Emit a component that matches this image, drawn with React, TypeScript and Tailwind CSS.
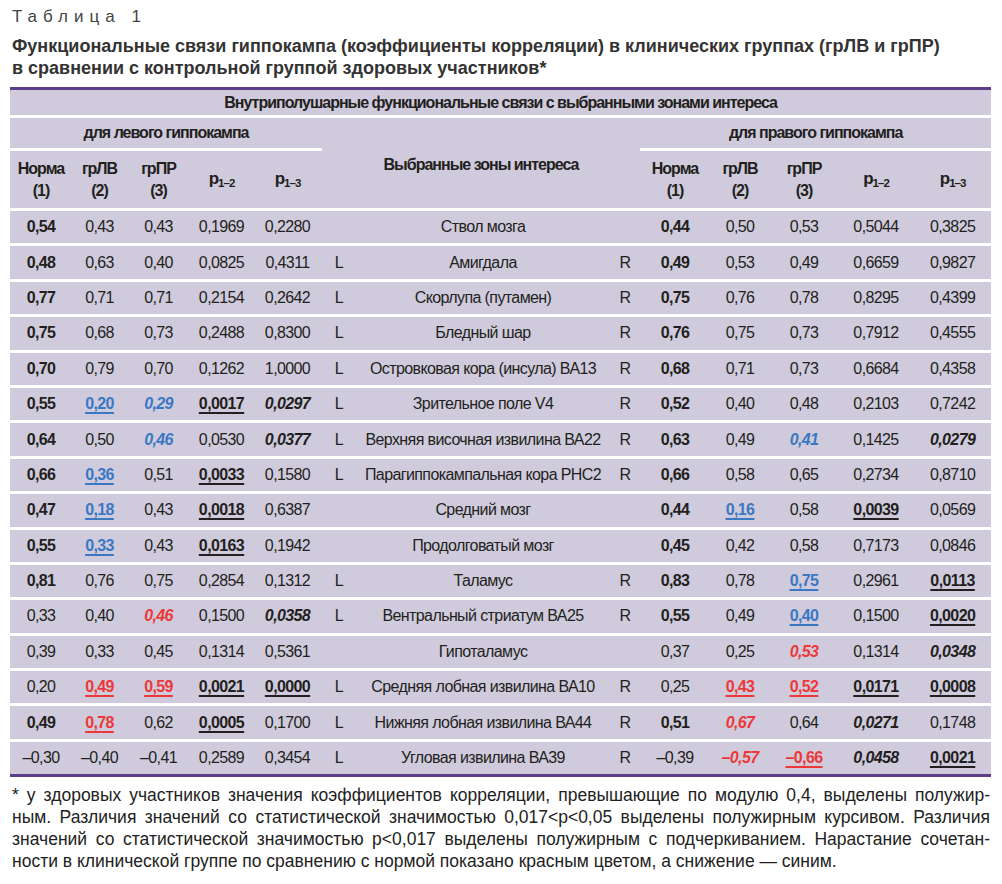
import clsx from 'clsx';

// cell format: "text|flags"  b = bold, i = bold italic, u = bold underline, B = blue, R = red
type Row = { left: string[]; side: boolean; zone: string; right: string[] };

const ROWS: Row[] = [
  { left: ['0,54|b', '0,43', '0,43', '0,1969', '0,2280'], side: false, zone: 'Ствол мозга', right: ['0,44|b', '0,50', '0,53', '0,5044', '0,3825'] },
  { left: ['0,48|b', '0,63', '0,40', '0,0825', '0,4311'], side: true, zone: 'Амигдала', right: ['0,49|b', '0,53', '0,49', '0,6659', '0,9827'] },
  { left: ['0,77|b', '0,71', '0,71', '0,2154', '0,2642'], side: true, zone: 'Скорлупа (путамен)', right: ['0,75|b', '0,76', '0,78', '0,8295', '0,4399'] },
  { left: ['0,75|b', '0,68', '0,73', '0,2488', '0,8300'], side: true, zone: 'Бледный шар', right: ['0,76|b', '0,75', '0,73', '0,7912', '0,4555'] },
  { left: ['0,70|b', '0,79', '0,70', '0,1262', '1,0000'], side: true, zone: 'Островковая кора (инсула) ВА13', right: ['0,68|b', '0,71', '0,73', '0,6684', '0,4358'] },
  { left: ['0,55|b', '0,20|uB', '0,29|iB', '0,0017|u', '0,0297|i'], side: true, zone: 'Зрительное поле V4', right: ['0,52|b', '0,40', '0,48', '0,2103', '0,7242'] },
  { left: ['0,64|b', '0,50', '0,46|iB', '0,0530', '0,0377|i'], side: true, zone: 'Верхняя височная извилина ВА22', right: ['0,63|b', '0,49', '0,41|iB', '0,1425', '0,0279|i'] },
  { left: ['0,66|b', '0,36|uB', '0,51', '0,0033|u', '0,1580'], side: true, zone: 'Парагиппокампальная кора PHC2', right: ['0,66|b', '0,58', '0,65', '0,2734', '0,8710'] },
  { left: ['0,47|b', '0,18|uB', '0,43', '0,0018|u', '0,6387'], side: false, zone: 'Средний мозг', right: ['0,44|b', '0,16|uB', '0,58', '0,0039|u', '0,0569'] },
  { left: ['0,55|b', '0,33|uB', '0,43', '0,0163|u', '0,1942'], side: false, zone: 'Продолговатый мозг', right: ['0,45|b', '0,42', '0,58', '0,7173', '0,0846'] },
  { left: ['0,81|b', '0,76', '0,75', '0,2854', '0,1312'], side: true, zone: 'Таламус', right: ['0,83|b', '0,78', '0,75|uB', '0,2961', '0,0113|u'] },
  { left: ['0,33', '0,40', '0,46|iR', '0,1500', '0,0358|i'], side: true, zone: 'Вентральный стриатум ВА25', right: ['0,55|b', '0,49', '0,40|uB', '0,1500', '0,0020|u'] },
  { left: ['0,39', '0,33', '0,45', '0,1314', '0,5361'], side: false, zone: 'Гипоталамус', right: ['0,37', '0,25', '0,53|iR', '0,1314', '0,0348|i'] },
  { left: ['0,20', '0,49|uR', '0,59|uR', '0,0021|u', '0,0000|u'], side: true, zone: 'Средняя лобная извилина ВА10', right: ['0,25', '0,43|uR', '0,52|uR', '0,0171|u', '0,0008|u'] },
  { left: ['0,49|b', '0,78|uR', '0,62', '0,0005|u', '0,1700'], side: true, zone: 'Нижняя лобная извилина ВА44', right: ['0,51|b', '0,67|iR', '0,64', '0,0271|i', '0,1748'] },
  { left: ['–0,30', '–0,40', '–0,41', '0,2589', '0,3454'], side: true, zone: 'Угловая извилина ВА39', right: ['–0,39', '–0,57|iR', '–0,66|uR', '0,0458|i', '0,0021|u'] },
];

const NOTE = [
  '* у здоровых участников значения коэффициентов корреляции, превышающие по модулю 0,4, выделены полужир-',
  'ным. Различия значений со статистической значимостью 0,017<p<0,05 выделены полужирным курсивом. Различия',
  'значений со статистической значимостью p<0,017 выделены полужирным с подчеркиванием. Нарастание сочетан-',
  'ности в клинической группе по сравнению с нормой показано красным цветом, а снижение — синим.',
];

function Value({ raw }: { raw: string }) {
  const [text, flags = ''] = raw.split('|');
  return (
    <span
      className={clsx(
        flags.includes('b') && 'font-bold',
        flags.includes('i') && 'font-bold italic',
        flags.includes('u') && 'font-bold underline decoration-2 underline-offset-[3px]',
        flags.includes('B') && 'text-[#3a78c4]',
        flags.includes('R') && 'text-[#ee3838]',
      )}
    >
      {text}
    </span>
  );
}

function P({ sub }: { sub: string }) {
  return (
    <span>
      p<span className="text-[11.5px] align-[-3px]">{sub}</span>
    </span>
  );
}

const GROUP_HEAD = [
  ['Норма', '(1)'],
  ['грЛВ', '(2)'],
  ['грПР', '(3)'],
];

function HeadCells({ side }: { side: string }) {
  return (
    <>
      {GROUP_HEAD.map(([a, b]) => (
        <td key={side + a} className="h-[60px] border-b-[3px] border-white p-0 leading-[22px]">
          {a}
          <br />
          {b}
        </td>
      ))}
      <td className="border-b-[3px] border-white p-0 text-[17px]">
        <P sub="1–2" />
      </td>
      <td className="border-b-[3px] border-white p-0 text-[17px]">
        <P sub="1–3" />
      </td>
    </>
  );
}

export default function App() {
  return (
    <div className="w-[1002px] h-[884px] bg-white px-[10px] pt-[6px] text-[#231f20] font-['Liberation_Sans',Arial,sans-serif]">
      <div className="px-[2px] text-[17px] leading-[22px] tracking-[6px] text-[#444]">Таблица 1</div>
      <div className="mt-[7px] px-[2px] text-[18px] leading-[22px] font-bold text-[#333]">
        Функциональные связи гиппокампа (коэффициенты корреляции) в клинических группах (грЛВ и грПР)
        <br />
        в сравнении с контрольной группой здоровых участников*
      </div>

      <table className="mt-[8px] w-[981px] table-fixed border-separate border-spacing-0 bg-[#cfcbdc] border-t-[3px] border-[#5a3e8b] text-[16px] tracking-[-0.6px] text-center">
        <colgroup>
          <col className="w-[62px]" />
          <col className="w-[55px]" />
          <col className="w-[63px]" />
          <col className="w-[63px]" />
          <col className="w-[69px]" />
          <col className="w-[34px]" />
          <col className="w-[254px]" />
          <col className="w-[30px]" />
          <col className="w-[70px]" />
          <col className="w-[60px]" />
          <col className="w-[68px]" />
          <col className="w-[76px]" />
          <col className="w-[77px]" />
        </colgroup>
        <thead className="font-bold tracking-[-1px]">
          <tr>
            <td colSpan={13} className="h-[28px] border-b-[3px] border-white p-0">
              Внутриполушарные функциональные связи с выбранными зонами интереса
            </td>
          </tr>
          <tr>
            <td colSpan={5} className="h-[33px] border-b-[3px] border-white p-0">
              для левого гиппокампа
            </td>
            <td colSpan={3} rowSpan={2} className="p-0 pt-[4px] border-b-[3px] border-white">
              Выбранные зоны интереса
            </td>
            <td colSpan={5} className="h-[33px] border-b-[3px] border-white p-0">
              для правого гиппокампа
            </td>
          </tr>
          <tr>
            <HeadCells side="l" />
            <HeadCells side="r" />
          </tr>
        </thead>
        <tbody>
          {ROWS.map((row, i) => {
            const last = i === ROWS.length - 1;
            const cell = clsx('h-[35.4px] p-0 border-b-[3px]', last ? 'border-[#5a3e8b]' : 'border-white');
            return (
              <tr key={row.zone}>
                {row.left.map((v, j) => (
                  <td key={`l${j}`} className={cell}>
                    <Value raw={v} />
                  </td>
                ))}
                <td className={cell}>{row.side ? 'L' : ''}</td>
                <td className={clsx(cell, 'whitespace-nowrap')}>{row.zone}</td>
                <td className={cell}>{row.side ? 'R' : ''}</td>
                {row.right.map((v, j) => (
                  <td key={`r${j}`} className={cell}>
                    <Value raw={v} />
                  </td>
                ))}
              </tr>
            );
          })}
        </tbody>
      </table>

      <div className="mt-[7px] px-[2px] text-[17.5px] leading-[22px] text-[#222]">
        {NOTE.map((line, i) => (
          <p key={i} className={clsx('whitespace-nowrap', i < NOTE.length - 1 && 'text-justify [text-align-last:justify]')}>
            {line}
          </p>
        ))}
      </div>
    </div>
  );
}
